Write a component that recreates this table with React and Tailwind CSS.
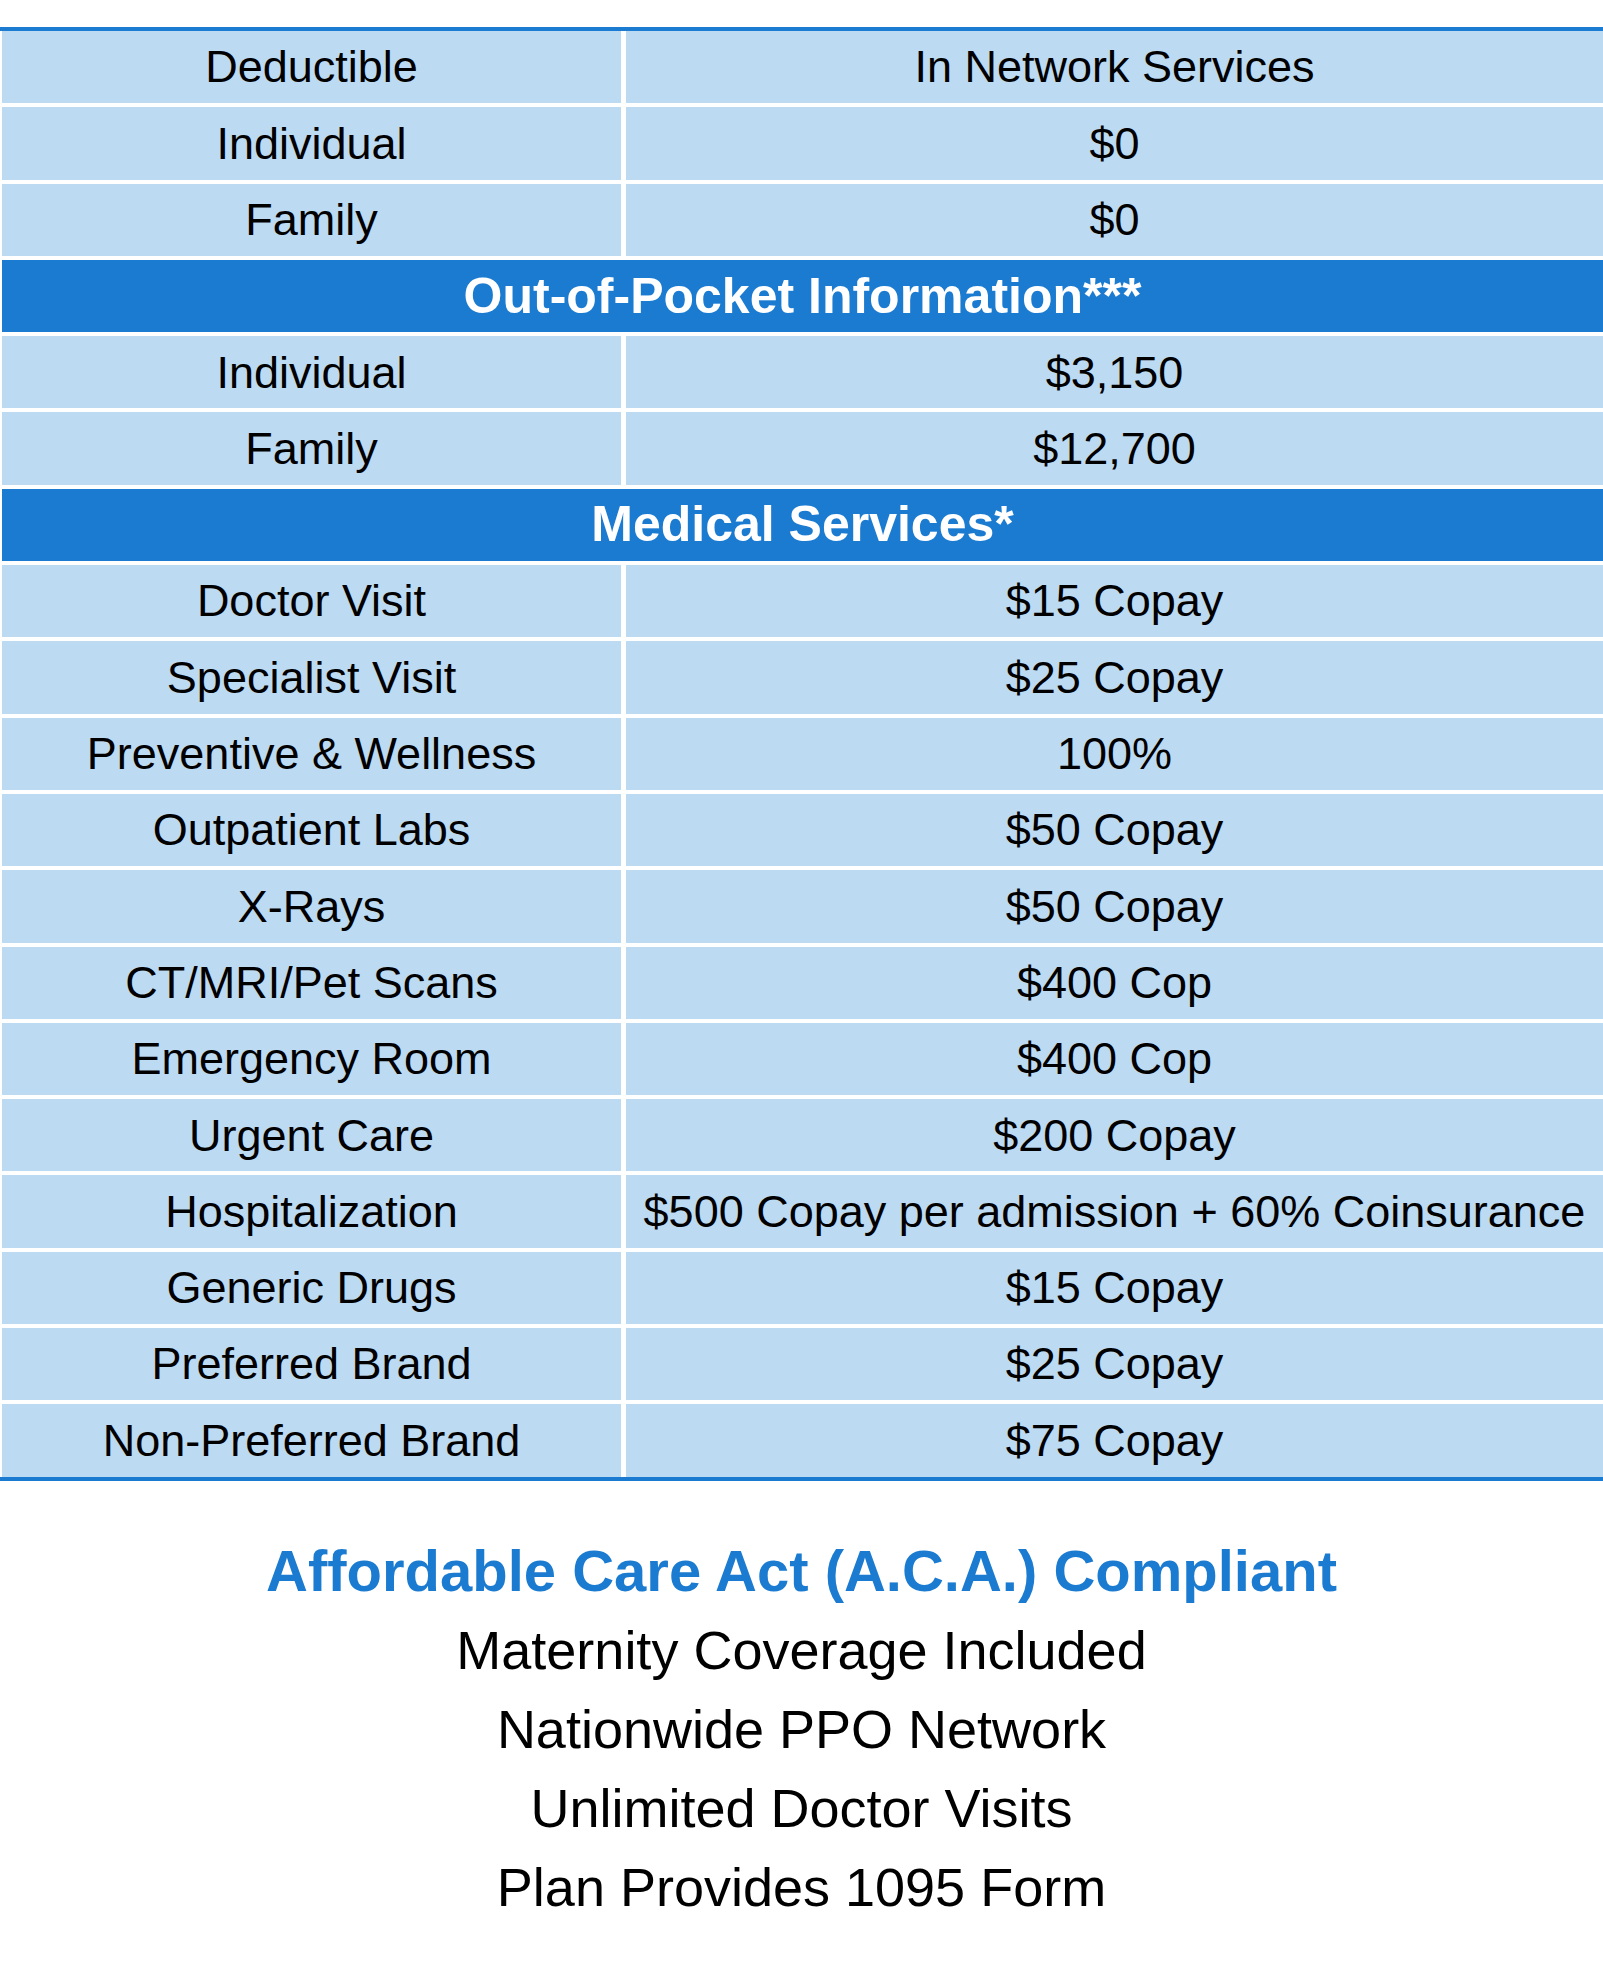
const deductible = [
  ['Individual', '$0'],
  ['Family', '$0'],
]

const outOfPocket = [
  ['Individual', '$3,150'],
  ['Family', '$12,700'],
]

const medical = [
  ['Doctor Visit', '$15 Copay'],
  ['Specialist Visit', '$25 Copay'],
  ['Preventive & Wellness', '100%'],
  ['Outpatient Labs', '$50 Copay'],
  ['X-Rays', '$50 Copay'],
  ['CT/MRI/Pet Scans', '$400 Cop'],
  ['Emergency Room', '$400 Cop'],
  ['Urgent Care', '$200 Copay'],
  ['Hospitalization', '$500 Copay per admission + 60% Coinsurance'],
  ['Generic Drugs', '$15 Copay'],
  ['Preferred Brand', '$25 Copay'],
  ['Non-Preferred Brand', '$75 Copay'],
]

const perks = [
  'Maternity Coverage Included',
  'Nationwide PPO Network',
  'Unlimited Doctor Visits',
  'Plan Provides 1095 Form',
]

function Row({ label, value }) {
  return (
    <div className="grid grid-cols-[619px_1fr] gap-x-[5px] pl-[2px]">
      <div className="h-[72.3px] flex items-center justify-center bg-[#bcdaf2] text-[45px] text-black whitespace-nowrap">
        {label}
      </div>
      <div className="h-[72.3px] flex items-center justify-center bg-[#bcdaf2] text-[45px] text-black whitespace-nowrap">
        {value}
      </div>
    </div>
  )
}

function SectionHeader({ children }) {
  return (
    <div className="pl-[2px]">
      <div className="h-[72.3px] flex items-center justify-center bg-[#1b7bd0] text-white font-bold text-[50px] whitespace-nowrap">
        {children}
      </div>
    </div>
  )
}

export default function App() {
  return (
    <div
      className="w-[1603px] min-h-[1979px] bg-white pt-[27px]"
      style={{ fontFamily: '"Liberation Sans", Arial, sans-serif' }}
    >
      {/* Benefits table */}
      <div className="flex flex-col gap-1 bg-white border-t-4 border-b-4 border-[#1b7bd0]">
        <Row label="Deductible" value="In Network Services" />
        {deductible.map(([l, v]) => (
          <Row key={'d' + l} label={l} value={v} />
        ))}
        <SectionHeader>Out-of-Pocket Information***</SectionHeader>
        {outOfPocket.map(([l, v]) => (
          <Row key={'o' + l} label={l} value={v} />
        ))}
        <SectionHeader>Medical Services*</SectionHeader>
        {medical.map(([l, v]) => (
          <Row key={'m' + l} label={l} value={v} />
        ))}
      </div>

      {/* Footer notes */}
      <div className="mt-[50px] flex flex-col items-center">
        <h2 className="text-[58px] leading-[80px] font-bold text-[#1b7bd0] whitespace-nowrap">
          Affordable Care Act (A.C.A.) Compliant
        </h2>
        {perks.map((p) => (
          <p key={p} className="text-[54px] leading-[79px] text-black whitespace-nowrap">
            {p}
          </p>
        ))}
      </div>
    </div>
  )
}
